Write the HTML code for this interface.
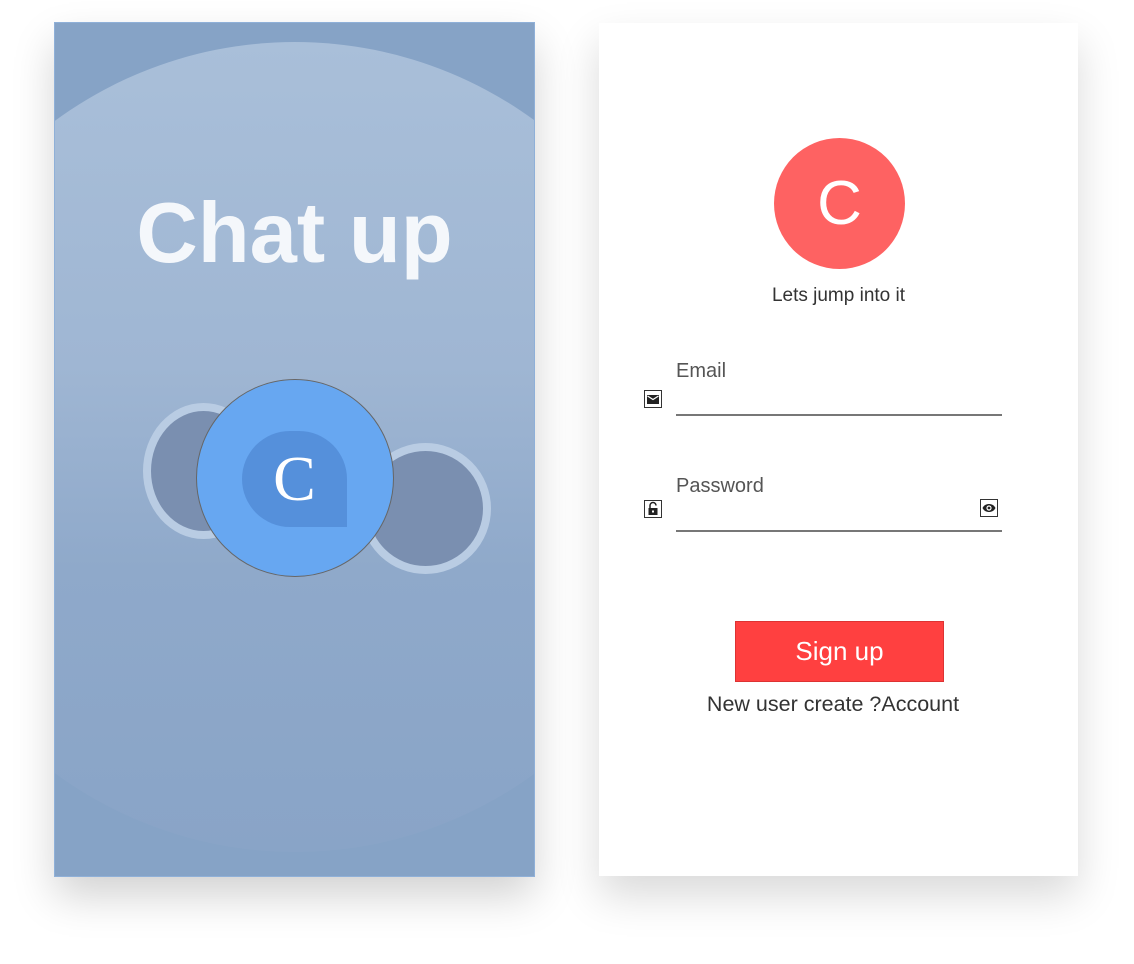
<!DOCTYPE html>
<html><head><style>
body{margin:0;width:1134px;height:964px;background:#fff;position:relative;overflow:hidden;font-family:"Liberation Sans",sans-serif}
.left{position:absolute;left:55px;top:23px;width:479px;height:853px;overflow:hidden;background:#86a3c6;box-shadow:0 20px 40px rgba(0,0,0,.18);outline:1px solid #8fb0d8}
.marble{position:absolute;left:-165px;top:19px;width:810px;height:810px;border-radius:50%;background:linear-gradient(#a9bfd9 0%,#9fb6d3 40%,#8fa9ca 65%,#89a4c7 100%)}
.cup{position:absolute;border-radius:50%;border:8px solid #b9cce3;background:#7a8fb0}
.right{position:absolute;left:599px;top:23px;width:479px;height:853px;background:#fff;box-shadow:0 20px 40px rgba(0,0,0,.15)}
.t{position:absolute;color:#444;white-space:nowrap}
.ic{position:absolute;width:18px;height:18px;border:1px solid #333;box-sizing:border-box;background:#fff}
</style></head><body>
<div class="left">
 <div class="marble"></div>
 <div class="cup" style="left:88px;top:380px;width:105px;height:120px"></div>
 <div class="cup" style="left:305px;top:420px;width:115px;height:115px"></div>
 <div style="position:absolute;left:0;width:479px;top:162px;text-align:center;color:#f4f7fb;font-weight:bold;font-size:85px;">Chat up</div>
 <div style="position:absolute;left:141px;top:356px;width:196px;height:196px;border-radius:50%;background:#67a7f1;border:1px solid #666"></div>
 <div style="position:absolute;left:187px;top:408px;width:105px;height:96px;background:#5590db;border-radius:48px 48px 0 48px"></div>
 <div style="position:absolute;left:187px;top:408px;width:105px;height:96px;text-align:center;line-height:96px;color:#fff;font-family:'Liberation Serif',serif;font-size:64px">C</div>
</div>
<div class="right">
 <div style="position:absolute;left:175px;top:115px;width:131px;height:131px;border-radius:50%;background:#fe6262;color:#fff;text-align:center;line-height:131px;font-size:62px">C</div>
 <div class="t" style="left:0;width:479px;text-align:center;top:262px;font-size:19px;color:#333">Lets jump into it</div>
 <div class="t" style="left:77px;top:337px;font-size:20px;color:#555">Email</div>
 <div style="position:absolute;left:77px;top:391px;width:326px;height:2px;background:#777"></div>
 <div class="ic" style="left:45px;top:367px"><svg width="16" height="16" viewBox="0 0 16 16"><rect x="2" y="4" width="12" height="9" fill="#222"/><path d="M2.5 5 L8 8.5 L13.5 5" stroke="#fff" stroke-width="1.2" fill="none"/></svg></div>
 <div class="t" style="left:77px;top:452px;font-size:20px;color:#555">Password</div>
 <div style="position:absolute;left:77px;top:507px;width:326px;height:2px;background:#777"></div>
 <div class="ic" style="left:45px;top:477px"><svg width="16" height="16" viewBox="0 0 16 16"><path d="M5 7V4.5a3 3 0 0 1 6 0" stroke="#222" stroke-width="1.5" fill="none"/><rect x="3.5" y="7" width="9" height="7" fill="#222"/><rect x="7" y="9.5" width="2" height="2" fill="#fff"/></svg></div>
 <div class="ic" style="left:381px;top:476px"><svg width="16" height="16" viewBox="0 0 16 16"><path d="M1.5 8C3 5 5.5 4 8 4s5 1 6.5 4C13 11 10.5 12 8 12S3 11 1.5 8z" fill="#222"/><circle cx="8" cy="8" r="2.6" fill="#fff"/><circle cx="8" cy="8" r="1.4" fill="#222"/></svg></div>
 <div style="position:absolute;left:136px;top:598px;width:209px;height:61px;background:#ff4040;border:1px solid #d33;box-sizing:border-box;color:#fff;text-align:center;line-height:59px;font-size:26px">Sign up</div>
 <div class="t" style="left:0;width:468px;text-align:center;top:669px;font-size:21.5px;color:#333">New user create ?Account</div>
</div>
</body></html>
